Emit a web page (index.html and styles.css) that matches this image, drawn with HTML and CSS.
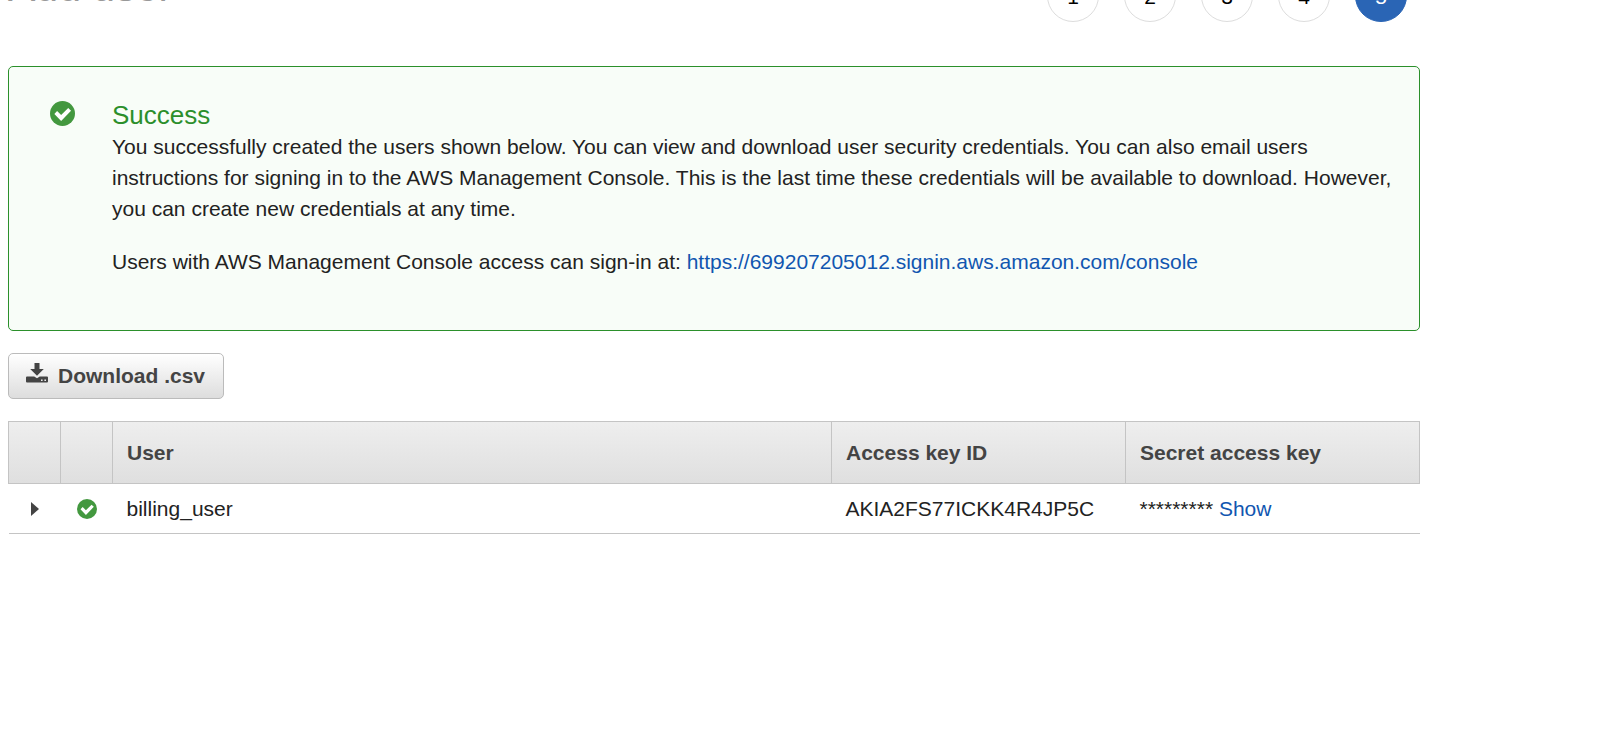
FILE: index.html
```html
<!DOCTYPE html>
<html lang="en">
<head>
    <meta charset="UTF-8">
    <meta name="viewport" content="width=device-width, initial-scale=1.0">
    <title>Add user</title>
    <link rel="stylesheet" href="styles.css">
</head>
<body>
    <div class="page">
        <header class="header">
            <h1 class="title">Add user</h1>
            <ol class="steps">
                <li class="step">1</li>
                <li class="step">2</li>
                <li class="step">3</li>
                <li class="step">4</li>
                <li class="step active">5</li>
            </ol>
        </header>

        <section class="alert">
            <svg class="alert-icon" viewBox="0 0 24 24" aria-hidden="true">
                <circle cx="12" cy="12" r="12" fill="#43983f"/>
                <path d="M4.2 12.4l2.6-2.7 3.9 3.7 6.8-6.6 2.7 2.6-9.5 9.8z" fill="#fff"/>
            </svg>
            <div class="alert-body">
                <h2 class="alert-title">Success</h2>
                <p>You successfully created the users shown below. You can view and download user security credentials. You can also email users instructions for signing in to the AWS Management Console. This is the last time these credentials will be available to download. However, you can create new credentials at any time.</p>
                <p>Users with AWS Management Console access can sign-in at: <a href="https://699207205012.signin.aws.amazon.com/console">https://699207205012.signin.aws.amazon.com/console</a></p>
            </div>
        </section>

        <button class="download" type="button">
            <svg class="download-icon" viewBox="0 0 22 20" aria-hidden="true">
                <path d="M8.5 0h5v6h4.3L11 12.8 4.2 6h4.3z" fill="#444"/>
                <path d="M1 13.4h7.2l2.8 1.8 2.8-1.8H21a1 1 0 0 1 1 1v4.2a1 1 0 0 1-1 1H1a1 1 0 0 1-1-1v-4.2a1 1 0 0 1 1-1z" fill="#444"/>
                <path d="M15 16.4h1.6V18H15zM18.4 16.4H20V18h-1.6z" fill="#eee"/>
            </svg>
            Download .csv
        </button>

        <table class="users">
            <thead>
                <tr>
                    <th class="col-icon"></th>
                    <th class="col-icon"></th>
                    <th>User</th>
                    <th class="col-key">Access key ID</th>
                    <th class="col-key">Secret access key</th>
                </tr>
            </thead>
            <tbody>
                <tr>
                    <td class="icon-cell">
                        <button class="expand" type="button" aria-label="Expand">
                            <svg class="arrow" viewBox="0 0 8 14" aria-hidden="true"><path d="M0 0l8 7-8 7z" fill="#444"/></svg>
                        </button>
                    </td>
                    <td class="icon-cell">
                        <svg class="status" viewBox="0 0 24 24" aria-hidden="true">
                            <circle cx="12" cy="12" r="12" fill="#43983f"/>
                            <path d="M4.2 12.4l2.6-2.7 3.9 3.7 6.8-6.6 2.7 2.6-9.5 9.8z" fill="#fff"/>
                        </svg>
                    </td>
                    <td>billing_user</td>
                    <td>AKIA2FS77ICKK4R4JP5C</td>
                    <td>********* <a href="#">Show</a></td>
                </tr>
            </tbody>
        </table>
    </div>
</body>
</html>
```
FILE: styles.css
```css
* {
    box-sizing: border-box;
}
body {
    margin: 0;
    background-color: #fff;
    color: #222;
    font-family: "Liberation Sans", Arial, sans-serif;
    font-size: 21px;
    line-height: 31px;
    overflow-x: hidden;
}
a {
    color: #1156b0;
    text-decoration: none;
}
.page {
    padding: 0 180px 0 8px;
}
/* header is scrolled partly out of view */
.header {
    display: flex;
    justify-content: space-between;
    align-items: flex-start;
    margin-top: -36px;
    margin-bottom: 44px;
    padding-right: 13px;
}
.title {
    margin: 0;
    color: #999;
    font-size: 41px;
    font-weight: normal;
    line-height: 46px;
}
.steps {
    display: flex;
    gap: 25px;
    margin: 0;
    padding: 6px 0 0;
    list-style: none;
}
.step {
    width: 52px;
    height: 52px;
    border: 1px solid #ddd;
    border-radius: 50%;
    color: #000;
    line-height: 52px;
    text-align: center;
}
.step.active {
    border-color: #2a65b5;
    background-color: #2a65b5;
    color: #fff;
}
.alert {
    display: flex;
    gap: 37px;
    padding: 32px 24px 53px 41px;
    border: 1px solid #2b902b;
    border-radius: 5px;
    background-color: #f8fdf8;
}
.alert-icon {
    flex: none;
    width: 25px;
    height: 25px;
    margin-top: 2px;
}
.alert-title {
    margin: 0;
    color: #2b8f2b;
    font-size: 26px;
    font-weight: normal;
    line-height: 32px;
}
.alert p {
    margin: 0 0 22px;
}
.alert p:last-child {
    margin-bottom: 0;
}
.download {
    display: flex;
    align-items: center;
    gap: 10px;
    height: 46px;
    margin: 22px 0;
    padding: 0 18px 0 17px;
    border: 1px solid #bbb;
    border-radius: 5px;
    background: linear-gradient(#fff, #ddd);
    color: #444;
    font-family: inherit;
    font-size: 21px;
    font-weight: bold;
    cursor: pointer;
}
.download-icon {
    width: 22px;
    height: 20px;
    margin-bottom: 6px;
}
.users {
    width: 100%;
    border-collapse: collapse;
    table-layout: fixed;
}
.users th {
    height: 62px;
    padding: 0 14px;
    border: 1px solid #c4c4c4;
    color: #444;
    text-align: left;
}
.users thead {
    background: linear-gradient(#eee, #dfdfdf);
}
.users td {
    height: 50px;
    padding: 0 14px;
    border-bottom: 1px solid #c4c4c4;
}
.users .col-icon {
    width: 52px;
}
.users .col-key {
    width: 294px;
}
.users .icon-cell {
    padding: 0;
    text-align: center;
}
.expand {
    padding: 0;
    border: none;
    background: none;
    cursor: pointer;
}
.arrow {
    display: block;
    width: 8px;
    height: 14px;
}
.status {
    display: block;
    width: 20px;
    height: 20px;
    margin: 0 auto;
}
```
